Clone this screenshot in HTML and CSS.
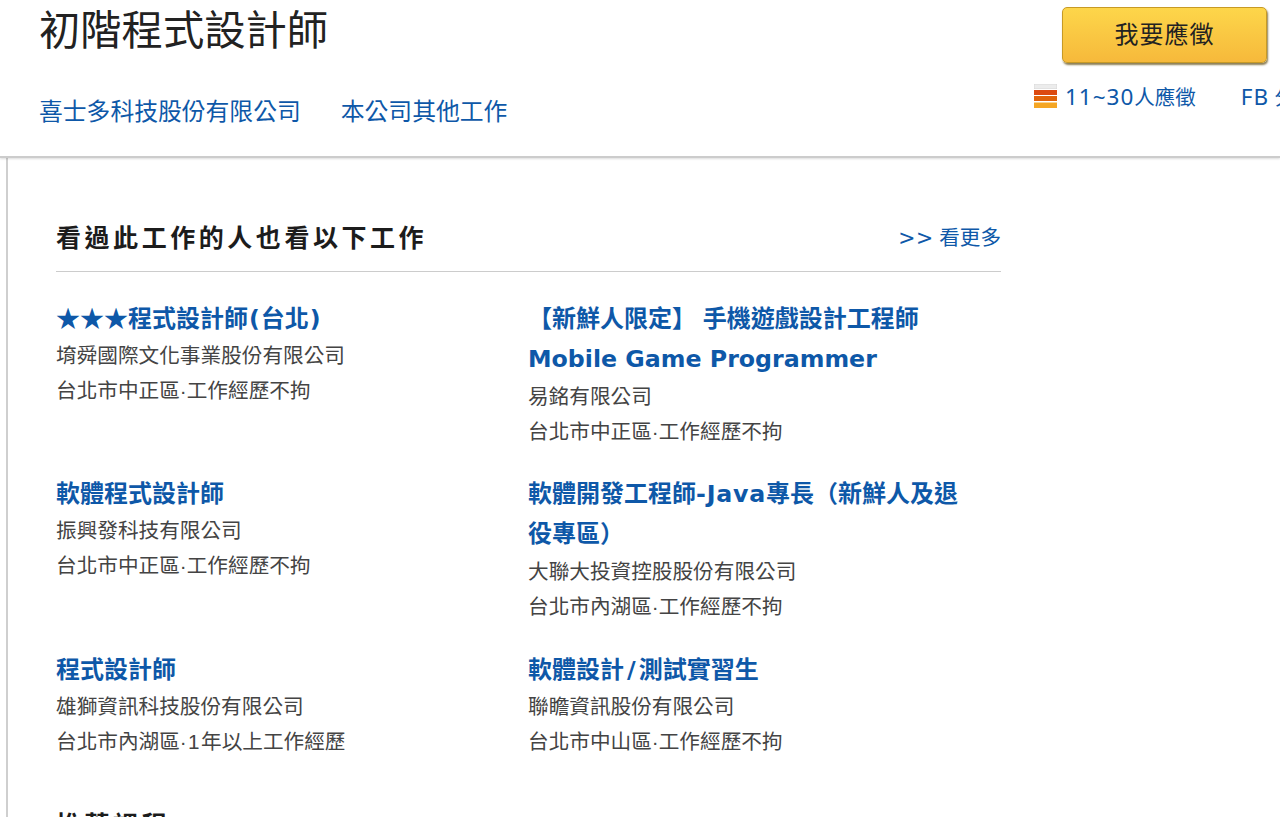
FILE: index.html
```html
<!DOCTYPE html>
<html lang="zh-Hant">
<head>
<meta charset="utf-8">
<title>初階程式設計師</title>
<link rel="stylesheet" href="styles.css">
</head>
<body>
<header class="top">
  <div class="top-main">
    <h1 class="job-title">初階程式設計師</h1>
    <nav class="top-links">
      <a class="top-link">喜士多科技股份有限公司</a>
      <a class="top-link">本公司其他工作</a>
    </nav>
  </div>
  <div class="top-side">
    <button class="apply">我要應徵</button>
    <div class="stats">
      <svg class="meter" width="23" height="24" viewBox="0 0 23 24" aria-hidden="true">
        <rect x="0.25" y="0.25" width="22.5" height="4.5" fill="#ececec" stroke="#d5d5d5" stroke-width="0.5"/>
        <rect x="0" y="6" width="23" height="5" fill="#dc4a10"/>
        <rect x="0" y="12" width="23" height="5" fill="#e0640a"/>
        <rect x="0" y="18.5" width="23" height="5.5" fill="#f5a623"/>
      </svg>
      <a class="count"><span class="stat-latin">11~30</span>人應徵</a>
      <a class="share"><span class="stat-latin">FB</span> 分享</a>
    </div>
  </div>
</header>
<div class="page">
  <main class="panel">
    <section class="related">
      <div class="section-head">
        <h2 class="section-title">看過此工作的人也看以下工作</h2>
        <a class="more"><span class="more-arrows">&gt;&gt;</span> 看更多</a>
      </div>
      <div class="jobs">
        <article class="job job-single">
          <a class="job-name">★★★程式設計師<span class="latin paren">(</span>台北<span class="latin paren">)</span></a>
          <p class="job-info">堉舜國際文化事業股份有限公司</p>
          <p class="job-info">台北市中正區·工作經歷不拘</p>
        </article>
        <article class="job">
          <a class="job-name">【新鮮人限定】 手機遊戲設計工程師 <span class="latin">Mobile Game Programmer</span></a>
          <p class="job-info">易銘有限公司</p>
          <p class="job-info">台北市中正區·工作經歷不拘</p>
        </article>
        <article class="job job-single">
          <a class="job-name">軟體程式設計師</a>
          <p class="job-info">振興發科技有限公司</p>
          <p class="job-info">台北市中正區·工作經歷不拘</p>
        </article>
        <article class="job">
          <a class="job-name">軟體開發工程師<span class="latin java">-Java</span>專長（新鮮人及退役專區）</a>
          <p class="job-info">大聯大投資控股股份有限公司</p>
          <p class="job-info">台北市內湖區·工作經歷不拘</p>
        </article>
        <article class="job job-single">
          <a class="job-name">程式設計師</a>
          <p class="job-info">雄獅資訊科技股份有限公司</p>
          <p class="job-info">台北市內湖區<span class="wide-dot">·1</span>年以上工作經歷</p>
        </article>
        <article class="job job-single">
          <a class="job-name">軟體設計<span class="latin slash">/</span>測試實習生</a>
          <p class="job-info">聯瞻資訊股份有限公司</p>
          <p class="job-info">台北市中山區·工作經歷不拘</p>
        </article>
      </div>
    </section>
    <h2 class="section-title next-title">推薦課程</h2>
  </main>
</div>
</body>
</html>
```
FILE: styles.css
```css
* { box-sizing: border-box; }
html, body { margin: 0; height: 817px; overflow: hidden; background: #fff; }
body {
  font-family: "Liberation Sans", "Noto Sans CJK TC", sans-serif;
  color: #333;
}
a { color: #0e58a8; text-decoration: none; }

.top {
  height: 158px;
  display: flex;
  justify-content: space-between;
  padding-left: 39px;
  border-bottom: 2px solid #cccccc;
  box-shadow: 0 1px 2px rgba(0,0,0,.14);
  position: relative;
  background: #fff;
}
.job-title {
  margin: 8px 0 0;
  font-size: 41.3px;
  line-height: 46px;
  font-weight: 400;
  color: #222;
}
.top-links { display: flex; gap: 40px; margin-top: 40px; }
.top-link { font-size: 23.8px; line-height: 36px; }

.top-side { width: 220px; flex: none; padding-top: 7px; }
.apply {
  display: block;
  width: 205px;
  height: 56px;
  margin-left: 2px;
  border: 1px solid #c79a25;
  border-radius: 5px;
  background: linear-gradient(#fdd64a, #f6b93b);
  box-shadow: 1px 2px 2px rgba(90,70,10,.7);
  font: 400 24px/1 "Liberation Sans", "Noto Sans CJK TC", sans-serif;
  letter-spacing: 1px;
  color: #222;
}
.stats {
  display: flex;
  align-items: center;
  margin-top: 19px;
  margin-left: -26px;
  white-space: nowrap;
  font-family: "Noto Sans", "Noto Sans CJK TC", sans-serif;
  font-size: 20.5px;
  line-height: 30px;
}
.stat-latin { font-size: 22.5px; letter-spacing: 1px; }
.meter { flex: none; margin: -2px 8px 0 0; }
.share { margin-left: 45px; }

.page { padding-left: 6px; height: 659px; }
.panel {
  height: 100%;
  border-left: 2px solid #cfcfcf;
  padding: 57px 0 0 48px;
  overflow: hidden;
  width: 995px;
}
.section-head {
  display: flex;
  justify-content: space-between;
  align-items: flex-start;
  height: 57px;
  border-bottom: 1px solid #ccc;
}
.section-title {
  margin: 0;
  font-size: 25px;
  line-height: 46px;
  font-weight: 700;
  letter-spacing: 3.55px;
  color: #1c1c1c;
}
.more { font-size: 20.6px; line-height: 46px; }
.more-arrows { font-family: "DejaVu Sans", sans-serif; font-size: 20.5px; letter-spacing: .4px; }
.jobs {
  display: grid;
  grid-template-columns: 472px 473px;
  grid-template-rows: 175px 176px 150px;
  margin-top: 26.5px;
}
.job { padding-right: 40px; }
.job-name {
  display: block;
  font-size: 24px;
  line-height: 40px;
  font-weight: 700;
}
.job-single .job-name { margin-bottom: -1px; }
.latin { font-family: "DejaVu Sans", sans-serif; font-size: 23.7px; }
.paren { padding: 0 1px; }
.java { letter-spacing: .8px; }
.slash { padding: 0 3px; }
.job-info { margin: 0; font-size: 20.65px; line-height: 35px; color: #444; }
.wide-dot { letter-spacing: 1.4px; }
.next-title { margin-top: 2.5px; }
```
